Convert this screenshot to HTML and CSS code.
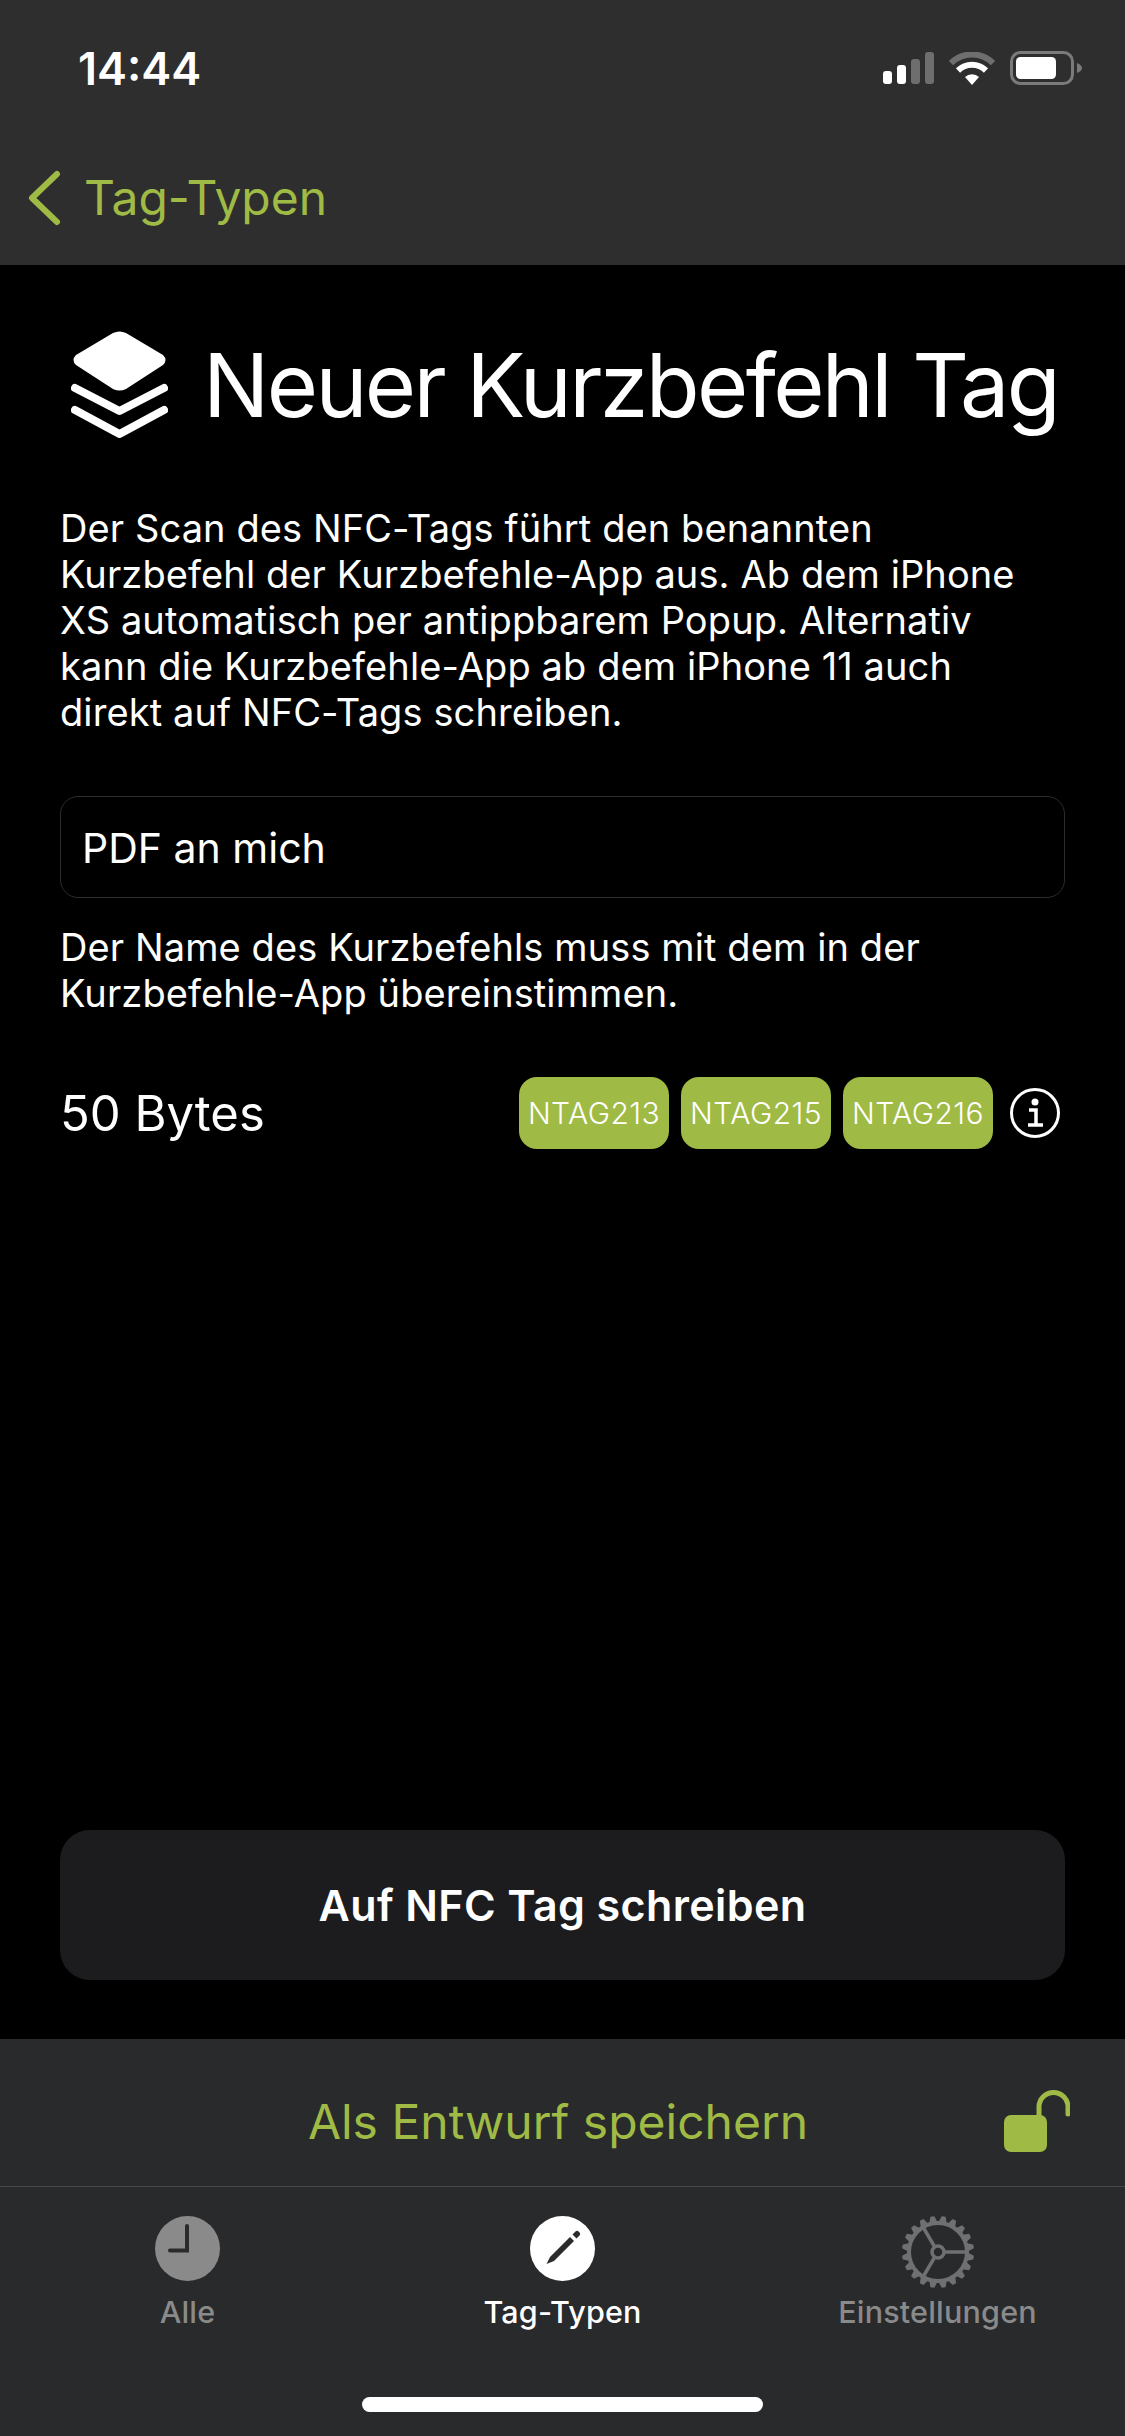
FILE: index.html
```html
<!DOCTYPE html>
<html lang="de">
<head>
    <meta charset="UTF-8">
    <meta name="viewport" content="width=device-width, initial-scale=1.0">
    <title>Neuer Kurzbefehl Tag</title>
    <link rel="stylesheet" href="styles.css">
</head>
<body>
    <header class="top-bar">
        <div class="status-bar">
            <span class="time">14:44</span>
            <div class="status-icons">
                <svg class="signal" width="51" height="32" viewBox="0 0 51 32">
                    <rect x="0" y="19" width="9" height="13" rx="3" fill="#fff"/>
                    <rect x="14" y="13" width="9" height="19" rx="3" fill="#fff"/>
                    <rect x="28" y="7" width="9" height="25" rx="3" fill="#6e6e6e"/>
                    <rect x="42" y="0" width="9" height="32" rx="3" fill="#6e6e6e"/>
                </svg>
                <svg class="wifi" width="46" height="33" viewBox="0 0 46 33">
                    <path d="M2 11 A30 30 0 0 1 44 11" fill="none" stroke="#6e6e6e" stroke-width="6"/>
                    <path d="M9 18.500 A20 20 0 0 1 37 18.500" fill="none" stroke="#fff" stroke-width="6"/>
                    <path d="M16 25 L23 33 L30 25 A10 10 0 0 0 16 25 Z" fill="#fff"/>
                </svg>
                <svg class="battery" width="72" height="34" viewBox="0 0 72 34">
                    <rect x="1.500" y="1.500" width="61" height="31" rx="9" fill="none" stroke="#7a7a7a" stroke-width="3"/>
                    <rect x="6" y="6" width="40" height="22" rx="4.500" fill="#fff"/>
                    <path d="M67 12 C70 13 72 15 72 17 C72 19 70 21 67 22 Z" fill="#7a7a7a"/>
                </svg>
            </div>
        </div>
        <a class="back-link" href="#">
            <svg width="34" height="56" viewBox="0 0 34 56">
                <path d="M30 4 L5 28 L30 52" fill="none" stroke="#9fba45" stroke-width="6" stroke-linecap="round" stroke-linejoin="round"/>
            </svg>
            <span>Tag-Typen</span>
        </a>
    </header>

    <main class="content">
        <div class="title-row">
            <svg width="97" height="107" viewBox="0 0 97 107">
                <path d="M42 2 Q48.500 -1 55 2 L92 24 Q97 29 92 34 L55 58 Q48.500 61 42 58 L5 34 Q0 29 5 24 Z" fill="#fff"/>
                <path d="M4 57 L48.500 80 L93 57" fill="none" stroke="#fff" stroke-width="8" stroke-linecap="round" stroke-linejoin="round"/>
                <path d="M4 79 L48.500 103 L93 79" fill="none" stroke="#fff" stroke-width="8" stroke-linecap="round" stroke-linejoin="round"/>
            </svg>
            <h1>Neuer Kurzbefehl Tag</h1>
        </div>

        <p class="description">Der Scan des NFC-Tags führt den benannten<br>Kurzbefehl der Kurzbefehle-App aus. Ab dem iPhone<br>XS automatisch per antippbarem Popup. Alternativ<br>kann die Kurzbefehle-App ab dem iPhone 11 auch<br>direkt auf NFC-Tags schreiben.</p>

        <div class="name-field">PDF an mich</div>

        <p class="hint">Der Name des Kurzbefehls muss mit dem in der<br>Kurzbefehle-App übereinstimmen.</p>

        <div class="bytes-row">
            <span class="bytes">50 Bytes</span>
            <div class="tags">
                <span class="tag">NTAG213</span>
                <span class="tag">NTAG215</span>
                <span class="tag">NTAG216</span>
                <svg class="info" width="50" height="50" viewBox="0 0 50 50">
                    <circle cx="25" cy="25" r="23.500" fill="none" stroke="#fff" stroke-width="3"/>
                    <circle cx="25" cy="14" r="3.500" fill="#fff"/>
                    <path d="M19 22 H26 V36 M18 37 H33" fill="none" stroke="#fff" stroke-width="3.500"/>
                </svg>
            </div>
        </div>

        <button class="write-button">Auf NFC Tag schreiben</button>
    </main>

    <footer class="bottom-bar">
        <div class="save-row">
            <span>Als Entwurf speichern</span>
            <svg class="lock" width="66" height="62" viewBox="0 0 66 62">
                <rect x="0" y="25" width="43" height="37" rx="7" fill="#9fba45"/>
                <path d="M35 26 V17 A14.500 14.500 0 0 1 64 17 V24" fill="none" stroke="#9fba45" stroke-width="5" stroke-linecap="round"/>
            </svg>
        </div>
        <nav class="tabs">
            <div class="tab">
                <svg width="65" height="74" viewBox="0 0 65 74">
                    <circle cx="32.500" cy="32.500" r="32.500" fill="#8a8a8a"/>
                    <path d="M32 10 V34.500 H15" fill="none" stroke="#2a2b2d" stroke-width="4" stroke-linecap="round"/>
                </svg>
                <span>Alle</span>
            </div>
            <div class="tab active">
                <svg width="65" height="74" viewBox="0 0 65 74">
                    <circle cx="32.500" cy="32.500" r="32.500" fill="#fff"/>
                    <path d="M16.500 48 L20 41 L40 21 L44 25 L24 45 Z" fill="#2a2b2d"/>
                    <path d="M42.500 18.500 L45.500 15.500 Q47 14 48.500 15.500 L49.500 16.500 Q51 18 49.500 19.500 L46.500 22.500 Z" fill="#2a2b2d"/>
                </svg>
                <span>Tag-Typen</span>
            </div>
            <div class="tab">
                <svg width="72" height="74" viewBox="-36 -36 72 74">
                    <defs>
                        <path id="tooth" d="M-4 -30 L-2 -36 L2 -36 L4 -30 Z" fill="#6f7071"/>
                    </defs>
                    <use href="#tooth" transform="rotate(9)"/>
                    <use href="#tooth" transform="rotate(27)"/>
                    <use href="#tooth" transform="rotate(45)"/>
                    <use href="#tooth" transform="rotate(63)"/>
                    <use href="#tooth" transform="rotate(81)"/>
                    <use href="#tooth" transform="rotate(99)"/>
                    <use href="#tooth" transform="rotate(117)"/>
                    <use href="#tooth" transform="rotate(135)"/>
                    <use href="#tooth" transform="rotate(153)"/>
                    <use href="#tooth" transform="rotate(171)"/>
                    <use href="#tooth" transform="rotate(189)"/>
                    <use href="#tooth" transform="rotate(207)"/>
                    <use href="#tooth" transform="rotate(225)"/>
                    <use href="#tooth" transform="rotate(243)"/>
                    <use href="#tooth" transform="rotate(261)"/>
                    <use href="#tooth" transform="rotate(279)"/>
                    <use href="#tooth" transform="rotate(297)"/>
                    <use href="#tooth" transform="rotate(315)"/>
                    <use href="#tooth" transform="rotate(333)"/>
                    <use href="#tooth" transform="rotate(351)"/>
                    <circle r="29" fill="none" stroke="#6f7071" stroke-width="4"/>
                    <path d="M6 0 H29 M-3.500 -5.500 L-15 -25 M-3.500 5.500 L-15 25" stroke="#6f7071" stroke-width="3.500"/>
                    <circle r="6" fill="none" stroke="#6f7071" stroke-width="3.500"/>
                </svg>
                <span>Einstellungen</span>
            </div>
        </nav>
        <div class="home-bar"></div>
    </footer>
</body>
</html>
```

FILE: styles.css
```css
* {
    box-sizing: border-box;
}
body {
    display: flex;
    flex-direction: column;
    width: 1125px;
    height: 2436px;
    margin: 0;
    overflow: hidden;
    background: #000;
    color: #fff;
    font-family: Inter, "Liberation Sans", sans-serif;
}

/* top */
.top-bar {
    height: 265px;
    background: #2e2e2e;
}
.status-bar {
    display: flex;
    justify-content: space-between;
    align-items: center;
    height: 136px;
    padding: 0 43px 0 78px;
}
.time {
    font-size: 45px;
    font-weight: 600;
}
.status-icons {
    display: flex;
    align-items: center;
    gap: 15px;
}
.back-link {
    display: flex;
    align-items: center;
    gap: 23px;
    padding: 32px 0 0 27px;
    color: #9fba45;
    font-size: 48px;
    text-decoration: none;
}

/* content */
.content {
    display: flex;
    flex-direction: column;
    flex: 1;
    padding: 0 60px 59px;
}
.title-row {
    display: flex;
    align-items: center;
    gap: 35px;
    padding: 66px 0 0 11px;
}
.title-row svg {
    flex-shrink: 0;
}
.title-row h1 {
    margin: 0;
    font-size: 88px;
    font-weight: 400;
    letter-spacing: -2.600px;
    white-space: nowrap;
}
.description, .hint {
    margin: 0;
    font-size: 38px;
    letter-spacing: 0.100px;
    line-height: 46px;
}
.description {
    margin-top: 67px;
}
.name-field {
    display: flex;
    align-items: center;
    height: 102px;
    margin-top: 61px;
    padding: 2px 0 0 21px;
    border: 1px solid #2c2c2c;
    border-radius: 18px;
    font-size: 41px;
}
.hint {
    margin-top: 26px;
}
.bytes-row {
    display: flex;
    justify-content: space-between;
    align-items: center;
    margin-top: 61px;
}
.bytes {
    font-size: 49px;
}
.tags {
    display: flex;
    align-items: center;
    gap: 12px;
}
.tag {
    display: flex;
    justify-content: center;
    align-items: center;
    width: 150px;
    height: 72px;
    border-radius: 18px;
    background: #9fba45;
    font-size: 30px;
    font-weight: 300;
    letter-spacing: 0.400px;
}
.info {
    margin: 0 5px 0 5px;
}
.write-button {
    height: 150px;
    margin-top: auto;
    border: none;
    border-radius: 30px;
    background: #1c1c1e;
    color: #fff;
    font-family: inherit;
    font-size: 43px;
    font-weight: 600;
    letter-spacing: 0.400px;
}

/* bottom */
.bottom-bar {
    height: 397px;
    background: #292a2c;
}
.save-row {
    position: relative;
    display: flex;
    justify-content: center;
    align-items: center;
    height: 148px;
    padding: 18px 9px 0 0;
    border-bottom: 1px solid #47484a;
    color: #9fba45;
    font-size: 48px;
}
.lock {
    position: absolute;
    top: 51px;
    right: 55px;
}
.tabs {
    display: grid;
    grid-template-columns: repeat(3, 1fr);
    padding-top: 29px;
}
.tab {
    display: flex;
    flex-direction: column;
    align-items: center;
    color: #8a8a8a;
    font-size: 30.500px;
    font-weight: 500;
    letter-spacing: 0.200px;
}
.tab svg {
    display: block;
}
.tab span {
    margin-top: 3px;
}
.tab.active {
    color: #fff;
}
.home-bar {
    width: 401px;
    height: 15px;
    margin: 67px auto 0;
    border-radius: 8px;
    background: #fff;
}
```
